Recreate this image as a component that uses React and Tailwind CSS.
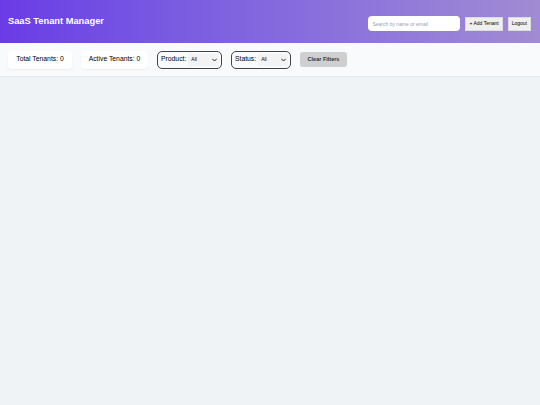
import React from 'react';

function Chevron() {
  return (
    <svg className="pointer-events-none absolute right-[2px] top-1/2 -translate-y-1/2 w-[5px] h-[4px]" viewBox="0 0 10 6" fill="none">
      <path d="M1 1l4 4 4-4" stroke="#222" strokeWidth="2" strokeLinecap="round" strokeLinejoin="round" />
    </svg>
  );
}

function FilterSelect({ label, width }) {
  return (
    <div className={`h-[18px] ${width} flex items-center gap-[2px] pl-[3px] pr-[2px] border border-[#444] rounded-[5px] text-[6.8px]`}>
      <span>{label}</span>
      <div className="relative flex-1">
        <select className="w-full h-[12px] appearance-none pl-[3px] text-[5px] bg-[#f3f3f3] rounded-[2px] outline-none">
          <option>All</option>
        </select>
        <Chevron />
      </div>
    </div>
  );
}

export default function App() {
  return (
    <div className="min-h-screen bg-[#f0f3f6] font-['Liberation_Sans',Arial,sans-serif] text-black">
      <header className="h-[43px] flex items-center justify-between pl-[8px] pr-[9px] bg-gradient-to-r from-[#6a3be6] to-[#a18bd3]">
        <h1 className="text-[9.3px] font-bold text-white mt-[1px]">SaaS Tenant Manager</h1>
        <div className="flex items-center gap-[5px] mt-[4px]">
          <input
            className="w-[92px] h-[15px] rounded-[4px] bg-white px-[4px] text-[5px] outline-none placeholder:text-gray-400"
            placeholder="Search by name or email"
          />
          <button className="h-[14px] px-[3px] bg-[#efefef] border border-[#dcdcdc] text-[5px]">+ Add Tenant</button>
          <button className="h-[14px] px-[3px] bg-[#efefef] border border-[#dcdcdc] text-[5px]">Logout</button>
        </div>
      </header>
      <div className="h-[34px] flex items-center gap-[9px] px-[8px] bg-[#f9fafb] border-b border-[#e8ebef]">
        <div className="h-[18px] w-[64px] flex items-center justify-center bg-white rounded-[4px] shadow-[0_1px_2px_rgba(0,0,0,0.06)] text-[6.8px]">Total Tenants: 0</div>
        <div className="h-[18px] w-[67px] flex items-center justify-center bg-white rounded-[4px] shadow-[0_1px_2px_rgba(0,0,0,0.06)] text-[6.8px]">Active Tenants: 0</div>
        <FilterSelect label="Product:" width="w-[65px]" />
        <FilterSelect label="Status:" width="w-[60px]" />
        <button className="h-[15px] w-[47px] bg-[#cfcfcf] rounded-[3px] text-[5.5px] font-bold text-[#333]">Clear Filters</button>
      </div>
    </div>
  );
}
